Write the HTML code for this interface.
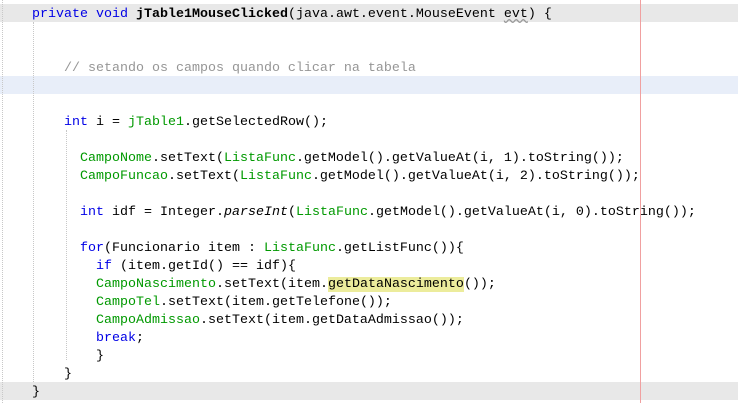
<!DOCTYPE html>
<html><head><style>
body{margin:0;width:738px;height:403px;background:#fff;overflow:hidden;position:relative;font-family:"Liberation Mono",monospace;font-size:13.33px;}
.l{position:absolute;left:0;width:738px;height:18px;line-height:18px;white-space:pre;color:#000;}
.t{margin-top:2px}
.g{background:#e8e8e8}
.h{background:#e8eef9}
.k{color:#0000e6}
.f{color:#009900}
.c{color:#969696}
.y{background:#ecec9c}
.red{position:absolute;left:640px;top:0;width:1px;height:403px;background:#f0a0a0}
.d{position:absolute;width:0;border-left:1px dotted #c8c8c8}
</style></head><body>
<div class="l g" style="top:4px"></div>
<div class="l h" style="top:76px"></div>
<div class="l g" style="top:382px"></div>
<div class="d" style="left:2px;top:0;height:403px"></div>
<div class="d" style="left:33px;top:22px;height:360px"></div>
<div class="d" style="left:66px;top:130px;height:230px"></div>
<div class="l t" style="top:4px">    <span class="k">private void</span> <b>jTable1MouseClicked</b>(java.awt.event.MouseEvent <span style="text-decoration:underline wavy #999">evt</span>) {</div>
<div class="l t c" style="top:58px">        // setando os campos quando clicar na tabela</div>
<div class="l t" style="top:112px">        <span class="k">int</span> i = <span class="f">jTable1</span>.getSelectedRow();</div>
<div class="l t" style="top:148px">          <span class="f">CampoNome</span>.setText(<span class="f">ListaFunc</span>.getModel().getValueAt(i, 1).toString());</div>
<div class="l t" style="top:166px">          <span class="f">CampoFuncao</span>.setText(<span class="f">ListaFunc</span>.getModel().getValueAt(i, 2).toString());</div>
<div class="l t" style="top:202px">          <span class="k">int</span> idf = Integer.<i>parseInt</i>(<span class="f">ListaFunc</span>.getModel().getValueAt(i, 0).toString());</div>
<div class="l t" style="top:238px">          <span class="k">for</span>(Funcionario item : <span class="f">ListaFunc</span>.getListFunc()){</div>
<div class="l t" style="top:256px">            <span class="k">if</span> (item.getId() == idf){</div>
<div class="l t" style="top:274px">            <span class="f">CampoNascimento</span>.setText(item.<span class="y">getDataNascimento</span>());</div>
<div class="l t" style="top:292px">            <span class="f">CampoTel</span>.setText(item.getTelefone());</div>
<div class="l t" style="top:310px">            <span class="f">CampoAdmissao</span>.setText(item.getDataAdmissao());</div>
<div class="l t" style="top:328px">            <span class="k">break</span>;</div>
<div class="l t" style="top:346px">            }</div>
<div class="l t" style="top:364px">        }</div>
<div class="l t" style="top:382px">    }</div>
<div class="red"></div>
</body></html>
